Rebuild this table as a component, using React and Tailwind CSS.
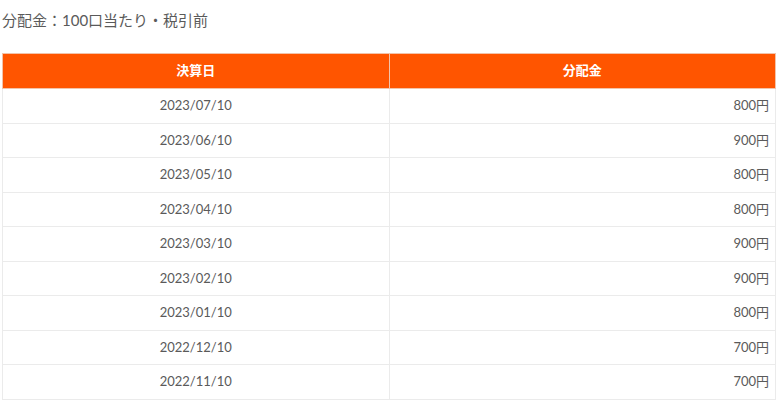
const rows = [
  ["2023/07/10", "800円"],
  ["2023/06/10", "900円"],
  ["2023/05/10", "800円"],
  ["2023/04/10", "800円"],
  ["2023/03/10", "900円"],
  ["2023/02/10", "900円"],
  ["2023/01/10", "800円"],
  ["2022/12/10", "700円"],
  ["2022/11/10", "700円"],
];

export default function App() {
  return (
    <div className="w-[780px] h-[406px] bg-white overflow-hidden text-[#5a5a5a]" style={{ fontFamily: '"Lato", "Noto Sans CJK JP", sans-serif' }}>
      <div className="pl-[2px] pt-[10px] text-[15px] leading-[20px]">分配金：100口当たり・税引前</div>
      <table className="ml-[2px] mt-[23px] w-[774px] border-collapse text-[13px]">
        <thead>
          <tr className="bg-[#ff5500] text-white h-[35px]">
            <th className="w-1/2 border border-[#f2c3aa] font-bold text-[13px]">決算日</th>
            <th className="w-1/2 border border-[#f2c3aa] font-bold text-[13px]">分配金</th>
          </tr>
        </thead>
        <tbody>
          {rows.map(([d, v]) => (
            <tr key={d} className="h-[34.5px]">
              <td className="border border-[#ebebeb] text-center">{d}</td>
              <td className="border border-[#ebebeb] text-right pr-[6px]">{v}</td>
            </tr>
          ))}
        </tbody>
      </table>
    </div>
  );
}
